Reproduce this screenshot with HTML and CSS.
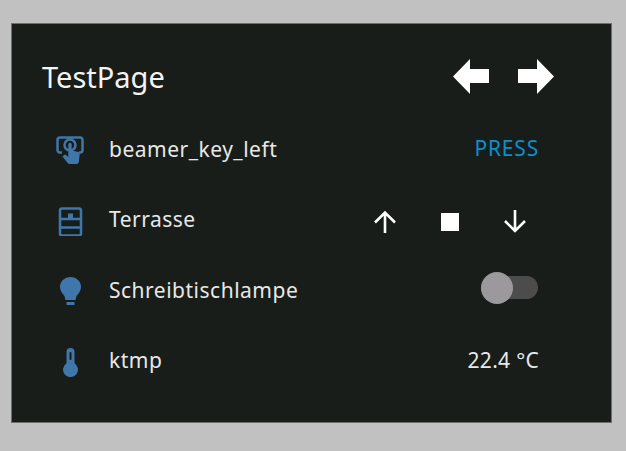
FILE: index.html
```html
<!DOCTYPE html>
<html lang="de">
<head>
  <meta charset="UTF-8" />
  <meta name="viewport" content="width=device-width, initial-scale=1.0" />
  <title>TestPage</title>
  <link rel="stylesheet" href="styles.css">
</head>
<body>
  <div class="panel">
    <div class="header">
      <h1>TestPage</h1>
      <div class="nav">
        <svg class="nav-arrow" viewBox="0 0 36 35"><path d="M0 17.500 17 0V10H36V24H17V35Z" /></svg>
        <svg class="nav-arrow" viewBox="0 0 36 35"><path d="M36 17.500 19 0V10H0V24H19V35Z" /></svg>
      </div>
    </div>

    <div class="row">
      <svg class="icon" viewBox="0 0 30 30">
        <path class="line" d="M7 18.500H4A2.500 2.500 0 0 1 2.500 16V5.500A2.500 2.500 0 0 1 5 3.500H25A2.500 2.500 0 0 1 27.500 5.500V16A2.500 2.500 0 0 1 25 18.500H24" />
        <circle class="line" cx="15" cy="11" r="5.500" />
        <path d="M13.300 10.500a1.700 1.700 0 0 1 3.400 0V16.500l5.800 1.200c1.500.3 2.400 1.400 2.200 2.900l-.8 7c-.2 1.500-1 2.400-2.300 2.400H14.500c-.8 0-1.400-.3-1.900-.9L7.500 22.500l1.300-1.300c.6-.6 1.500-.6 2.100-.1l2.400 1.900Z" />
      </svg>
      <span class="label">beamer_key_left</span>
      <span class="press">PRESS</span>
    </div>

    <div class="row">
      <svg class="icon icon-low" viewBox="0 0 30 30">
        <rect class="line" x="5" y="2.500" width="21" height="27" rx="2" />
        <path class="line" d="M5 13H26M5 21.500H26" />
        <path d="M13 7.500H18V13H13Z" />
      </svg>
      <span class="label">Terrasse</span>
      <div class="cover">
        <svg class="cover-btn" viewBox="0 0 24 24"><path class="arrow" d="M12 23V3M2 12.500 12 2.500 22 12.500" /></svg>
        <svg class="cover-btn" viewBox="0 0 24 24"><path class="fill" d="M3 3H21V21H3Z" /></svg>
        <svg class="cover-btn" viewBox="0 0 24 24"><path class="arrow" d="M12 0V20M2 11 12 21 22 11" /></svg>
      </div>
    </div>

    <div class="row">
      <svg class="icon icon-low" viewBox="0 0 30 30">
        <path d="M15.500 1C9.500 1 5 5.500 5 10.800c0 3.500 1.800 6 3.500 8 1.100 1.300 1.700 2.700 1.800 5.200H20.700c.1-2.500.7-3.900 1.800-5.200 1.700-2 3.500-4.500 3.500-8C26 5.500 21.500 1 15.500 1Z" />
        <path d="M11.500 26H19.500V29H11.500Z" />
      </svg>
      <span class="label">Schreibtischlampe</span>
      <div class="toggle"><div class="knob"></div></div>
    </div>

    <div class="row">
      <svg class="icon icon-lower" viewBox="0 0 30 30">
        <path fill-rule="evenodd" d="M11.500 5a4 4 0 0 1 8 0V16.200a7.500 7.500 0 1 1-8 0ZM14.500 6a1 1 0 0 1 2 0V12a1 1 0 0 1-2 0Z" />
      </svg>
      <span class="label">ktmp</span>
      <span class="value">22.4 °C</span>
    </div>
  </div>
</body>
</html>
```
FILE: styles.css
```css
body {
  font-family: "Noto Sans", sans-serif;
  background-color: #c1c1c1;
  margin: 0;
  padding: 23px 0 0 11px;
  overflow: hidden;
}

.panel {
  box-sizing: border-box;
  width: 601px;
  height: 400px;
  background-color: #181d1a;
  border: 1px solid #6b6f6d;
  padding: 0 73px 0 30px;
  color: #e8e8e8;
}

.header {
  box-sizing: border-box;
  display: flex;
  justify-content: space-between;
  align-items: center;
  height: 90px;
  padding-top: 14px;
}

h1 {
  font-size: 29px;
  font-weight: 400;
  margin: 0;
  color: #f4f4f4;
}

.nav {
  display: flex;
  gap: 29px;
  margin-right: -16px;
  margin-top: 1px;
}

.nav-arrow {
  width: 36px;
  height: 35px;
  fill: #ffffff;
}

.row {
  display: flex;
  align-items: center;
  height: 70.33px;
  padding-left: 13px;
}

.icon {
  width: 30px;
  height: 30px;
  fill: #3f77ab;
  margin-right: 24px;
  flex-shrink: 0;
}

.icon-low {
  margin-top: 3px;
}

.icon-lower {
  margin-top: 4px;
}

.icon .line {
  fill: none;
  stroke: #3f77ab;
  stroke-width: 2.500;
}

.label {
  flex: 1;
  font-size: 21px;
  letter-spacing: 0.5px;
}

.press {
  font-size: 21px;
  letter-spacing: 0.8px;
  color: #0a8fcf;
  margin-right: -1px;
  margin-bottom: 2px;
}

.value {
  font-size: 21px;
  letter-spacing: 0.3px;
  margin-right: -1px;
}

.cover {
  display: flex;
  gap: 41px;
  margin-right: 11px;
  margin-top: 6px;
}

.cover-btn {
  width: 24px;
  height: 24px;
}

.cover-btn .arrow {
  fill: none;
  stroke: #ffffff;
  stroke-width: 2.600;
}

.cover-btn .fill {
  fill: #ffffff;
}

.toggle {
  position: relative;
  width: 57px;
  height: 23px;
  margin-top: -4px;
  border-radius: 12px;
  background-color: #4c4c4c;
}

.knob {
  position: absolute;
  left: 0;
  top: -4px;
  width: 32px;
  height: 32px;
  border-radius: 50%;
  background-color: #9b999b;
}
```
